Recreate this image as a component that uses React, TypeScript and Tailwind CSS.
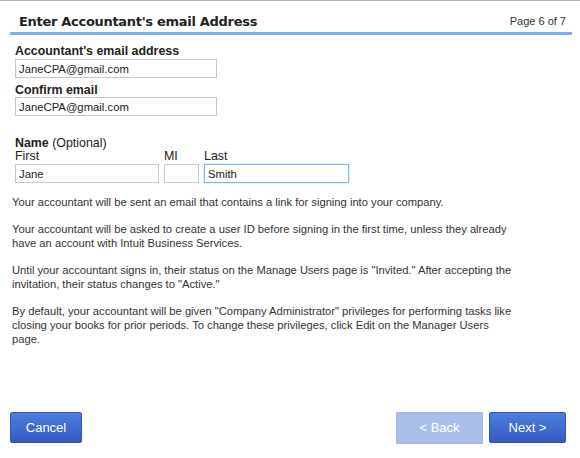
export default function App() {
  const arial = { fontFamily: '"Liberation Sans", Arial, sans-serif' };
  const inputCls =
    "h-[19px] border border-[#c8c8c8] px-[3px] text-[11.3px] text-[#222] outline-none bg-white";
  return (
    <div className="w-[580px] h-[458px] bg-white relative overflow-hidden" style={arial}>
      <div className="h-[1px] bg-[#b4b4b4] w-full" />
      <div className="flex items-end justify-between pl-[19px] pr-[14px] h-[31px] pb-[4px]">
        <div
          className="text-[13px] font-bold text-[#222] leading-none tracking-[-0.3px]"
          style={{ fontFamily: '"DejaVu Sans", Verdana, sans-serif' }}
        >
          Enter Accountant's email Address
        </div>
        <div className="text-[11px] text-[#333] leading-none pb-[1px]">Page 6 of 7</div>
      </div>
      <div className="h-[3px] bg-[#7eb0e8] ml-[10px] mr-[8px]" />
      <div className="pl-[15px] pt-[9px] text-[#222]">
        <div className="text-[12.4px] font-bold leading-[14px]">Accountant's email address</div>
        <input readOnly value="JaneCPA@gmail.com" className={`${inputCls} w-[202px] mt-[1px] block`} />
        <div className="text-[12.4px] font-bold leading-[14px] mt-[5px]">Confirm email</div>
        <input readOnly value="JaneCPA@gmail.com" className={`${inputCls} w-[202px] mt-[0px] block`} />
        <div className="mt-[20px] text-[12.4px] leading-[14px]">
          <span className="font-bold">Name</span> (Optional)
        </div>
        <div className="flex gap-[5px] text-[12.4px] leading-[13px]">
          <div className="flex flex-col">
            <span>First</span>
            <input readOnly value="Jane" className={`${inputCls} w-[144px] mt-[1px]`} />
          </div>
          <div className="flex flex-col">
            <span>MI</span>
            <input readOnly value="" className={`${inputCls} w-[35px] mt-[1px]`} />
          </div>
          <div className="flex flex-col">
            <span>Last</span>
            <input
              readOnly
              value="Smith"
              className="h-[19px] w-[145px] mt-[1px] border border-[#7fb5ee] shadow-[0_0_2px_#a8d0f8] px-[3px] text-[11.3px] text-[#222] outline-none bg-white"
            />
          </div>
        </div>
      </div>
      <div className="pl-[12px] w-[512px] mt-[12px] text-[11.2px] leading-[14px] text-[#333] flex flex-col gap-[13px]">
        <p>Your accountant will be sent an email that contains a link for signing into your company.</p>
        <p>
          Your accountant will be asked to create a user ID before signing in the first time, unless they already
          have an account with Intuit Business Services.
        </p>
        <p>
          Until your accountant signs in, their status on the Manage Users page is "Invited." After accepting the
          invitation, their status changes to "Active."
        </p>
        <p>
          By default, your accountant will be given "Company Administrator" privileges for performing tasks like
          closing your books for prior periods. To change these privileges, click Edit on the Manager Users page.
        </p>
      </div>
      <div className="absolute left-[10px] right-[14px] top-[412px] flex justify-between">
        <button className="w-[72px] h-[31px] rounded-[2px] border border-[#2f55b8] bg-gradient-to-b from-[#4d7fdc] to-[#3459c2] text-white text-[13px]">
          Cancel
        </button>
        <div className="flex gap-[6px]">
          <button className="w-[87px] h-[32px] border border-[#a2b6e2] bg-[#aabfe7] text-white text-[13px]">
            &lt; Back
          </button>
          <button className="w-[77px] h-[31px] rounded-[2px] border border-[#2f55b8] bg-gradient-to-b from-[#4d7fdc] to-[#3459c2] text-white text-[13px]">
            Next &gt;
          </button>
        </div>
      </div>
    </div>
  );
}
